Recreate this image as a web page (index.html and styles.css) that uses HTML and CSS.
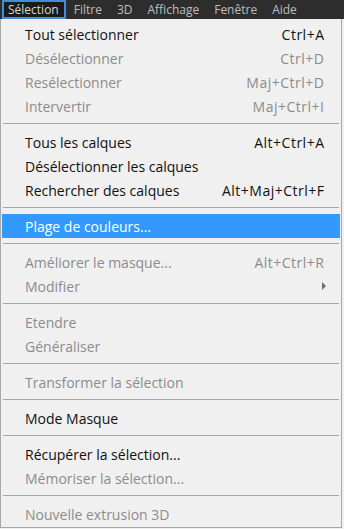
FILE: index.html
```html
<!DOCTYPE html>
<html lang="fr">
<head>
<meta charset="utf-8">
<link rel="stylesheet" href="styles.css">
</head>
<body>
<div class="menubar">
  <span class="tab active">Sélection</span>
  <span class="tab">Filtre</span>
  <span class="tab">3D</span>
  <span class="tab">Affichage</span>
  <span class="tab">Fenêtre</span>
  <span class="tab">Aide</span>
</div>
<div class="menu">
  <div class="item"><span>Tout sélectionner</span><span class="key">Ctrl+A</span></div>
  <div class="item dis"><span>Désélectionner</span><span class="key">Ctrl+D</span></div>
  <div class="item dis"><span>Resélectionner</span><span class="key">Maj+Ctrl+D</span></div>
  <div class="item dis"><span>Intervertir</span><span class="key">Maj+Ctrl+I</span></div>
  <div class="sep"></div>
  <div class="item"><span>Tous les calques</span><span class="key">Alt+Ctrl+A</span></div>
  <div class="item"><span>Désélectionner les calques</span></div>
  <div class="item"><span>Rechercher des calques</span><span class="key">Alt+Maj+Ctrl+F</span></div>
  <div class="sep"></div>
  <div class="item hl"><span>Plage de couleurs...</span></div>
  <div class="sep"></div>
  <div class="item dis"><span>Améliorer le masque...</span><span class="key">Alt+Ctrl+R</span></div>
  <div class="item dis"><span>Modifier</span><span class="arrow"></span></div>
  <div class="sep"></div>
  <div class="item dis"><span>Etendre</span></div>
  <div class="item dis"><span>Généraliser</span></div>
  <div class="sep"></div>
  <div class="item dis"><span>Transformer la sélection</span></div>
  <div class="sep"></div>
  <div class="item"><span>Mode Masque</span></div>
  <div class="sep"></div>
  <div class="item"><span>Récupérer la sélection...</span></div>
  <div class="item dis"><span>Mémoriser la sélection...</span></div>
  <div class="sep"></div>
  <div class="item dis"><span>Nouvelle extrusion 3D</span></div>
</div>
</body>
</html>
```
FILE: styles.css
```css
html, body {
  margin: 0;
  padding: 0;
  background: #f0f0f0;
  font-family: "Open Sans", "Noto Sans", sans-serif;
}
.menubar {
  height: 19px;
  background: #2d2d2d;
  display: flex;
  align-items: stretch;
  font-size: 12px;
  color: #bdbdbd;
  padding-left: 2px;
}
.tab {
  display: flex;
  align-items: center;
  padding: 0 7px 0 8px;
}
.tab.active {
  background: #1b1b1b;
  color: #d8d8d8;
  box-shadow: inset 0 0 0 2px #3d8ee0;
  padding: 0 7px 0 6px;
}
.menu {
  width: 342px;
  box-sizing: border-box;
  border: 1px solid #a7a7a7;
  border-top: none;
  background: #f0f0f0;
  padding: 3px 1px 1px 1px;
  font-size: 14px;
}
.item {
  height: 24px;
  display: flex;
  align-items: center;
  justify-content: space-between;
  padding: 0 16px 0 23px;
  color: #111;
}
.key {
  letter-spacing: 0.5px;
  margin-right: -0.5px;
}
.item.dis {
  color: #8c8c8c;
}
.item.hl {
  background: #3399ff;
  color: #ffffff;
}
.sep {
  height: 1px;
  background: #a7a7a7;
  margin: 5px 1px 6px 1px;
}
.arrow {
  width: 0;
  height: 0;
  border-left: 4px solid #6e6e6e;
  border-top: 4px solid transparent;
  border-bottom: 4px solid transparent;
  margin-right: -2px;
}
```
